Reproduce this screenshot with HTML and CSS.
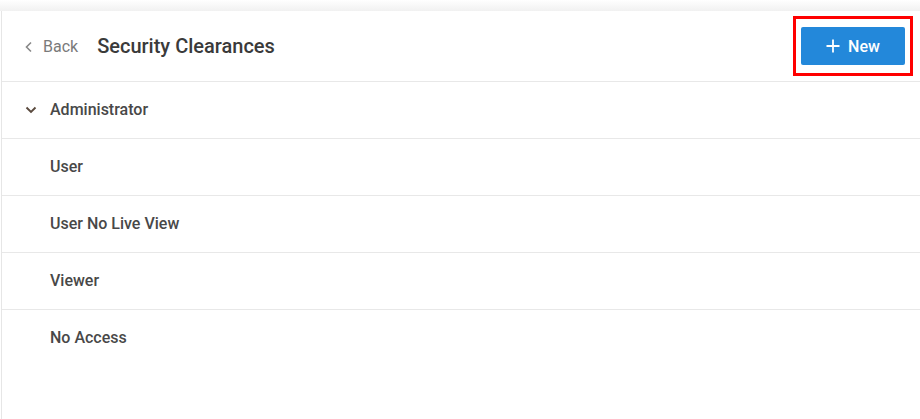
FILE: index.html
```html
<!DOCTYPE html>
<html lang="en">
<head>
<meta charset="utf-8">
<title>Security Clearances</title>
<link rel="stylesheet" href="styles.css">
</head>
<body>
<div class="topfade"></div>
<main class="card">
  <header class="header">
    <a class="back" href="#">
      <svg class="back-icon" width="10" height="12" viewBox="0 0 10 12"><path d="M7 1.5 L2.5 6 L7 10.5" fill="none" stroke="currentColor" stroke-width="1.6"/></svg>
      <span>Back</span>
    </a>
    <h1 class="title">Security Clearances</h1>
    <div class="actions">
      <button class="btn-new" type="button">
        <svg width="14" height="14" viewBox="0 0 14 14"><path d="M7 0.5 V13.5 M0.5 7 H13.5" stroke="#fff" stroke-width="1.8"/></svg>
        <span>New</span>
      </button>
      <div class="highlight"></div>
    </div>
  </header>
  <ul class="list">
    <li class="row">
      <svg class="caret" width="12" height="8" viewBox="0 0 12 8"><path d="M1.5 1.5 L6 6 L10.5 1.5" fill="none" stroke="currentColor" stroke-width="1.9"/></svg>
      <span>Administrator</span>
    </li>
    <li class="row"><span>User</span></li>
    <li class="row"><span>User No Live View</span></li>
    <li class="row"><span>Viewer</span></li>
    <li class="row last"><span>No Access</span></li>
  </ul>
</main>
</body>
</html>
```
FILE: styles.css
```css
html, body {
  margin: 0;
  padding: 0;
  background: #fff;
  font-family: Roboto, "Liberation Sans", Arial, sans-serif;
}
body {
  height: 419px;
  overflow: hidden;
}
.topfade {
  height: 11px;
  background: linear-gradient(#ffffff, #f1f1f1);
}
.card {
  margin-left: 1px;
  border-left: 1px solid #e6e6e6;
  background: #fff;
  min-height: 408px;
}
.header {
  display: flex;
  align-items: center;
  height: 70px;
  border-bottom: 1px solid #e8e8e8;
  padding-left: 22px;
  padding-right: 15px;
}
.back {
  display: flex;
  align-items: center;
  gap: 9px;
  color: #7a7a7a;
  text-decoration: none;
  font-size: 16px;
  margin-right: 19px;
}
.back-icon { color: #888; margin-top: 1px; }
.title {
  margin: 0;
  font-size: 20px;
  font-weight: 500;
  color: #3a3a3a;
  flex: 1;
  padding-bottom: 1px;
}
.actions {
  position: relative;
}
.btn-new {
  display: flex;
  align-items: center;
  justify-content: center;
  gap: 8px;
  width: 104px;
  height: 38px;
  border: none;
  border-radius: 2px;
  background: #2388da;
  color: #fff;
  font-family: inherit;
  font-size: 16px;
  font-weight: 500;
  padding: 0;
}
.highlight {
  position: absolute;
  left: -8px;
  right: -8px;
  top: -11px;
  bottom: -11px;
  border: 3px solid #f00;
  pointer-events: none;
}
.list {
  list-style: none;
  margin: 0;
  padding: 0;
}
.row {
  display: flex;
  align-items: center;
  box-sizing: border-box;
  height: 57px;
  padding-bottom: 2px;
  border-bottom: 1px solid #e8e8e8;
  padding-left: 48px;
  font-size: 16px;
  font-weight: 500;
  color: #484848;
  position: relative;
}
.row.last { border-bottom: none; }
.caret {
  position: absolute;
  left: 23px;
  top: 24px;
  color: #5a4a3e;
}
```
